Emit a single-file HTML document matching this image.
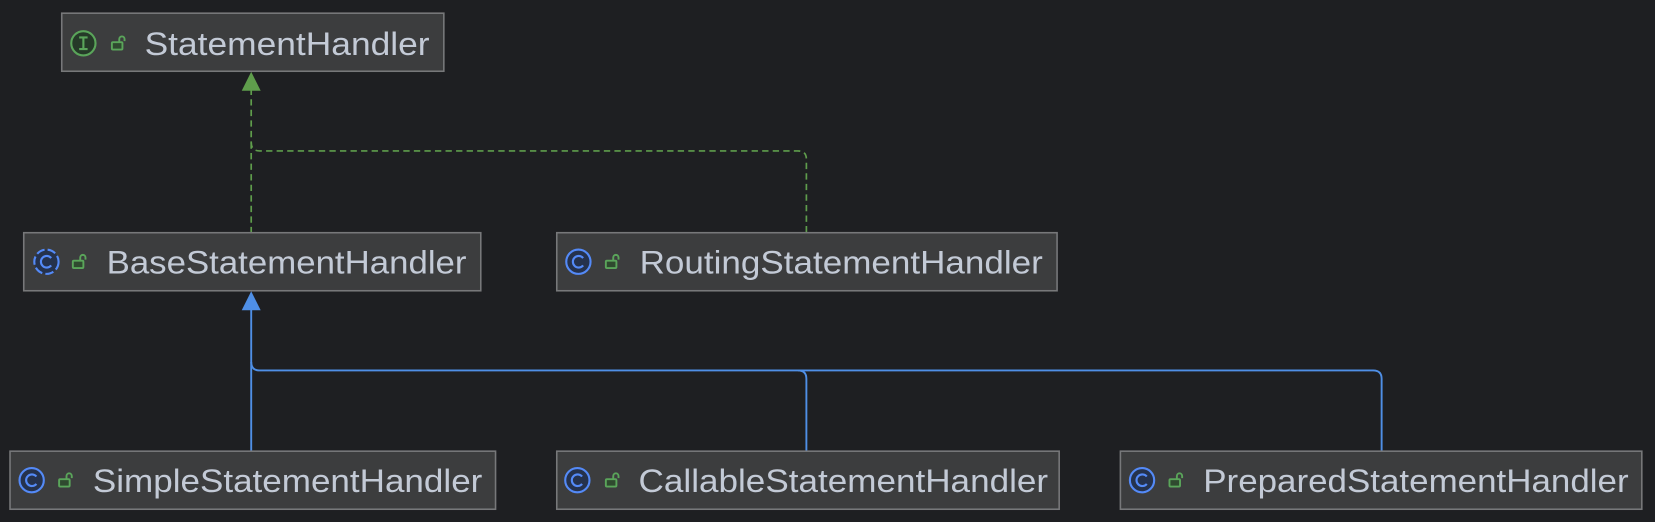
<!DOCTYPE html>
<html><head><meta charset="utf-8"><style>
html,body{margin:0;padding:0;background:#1e1f22;width:1655px;height:522px;overflow:hidden}
svg{display:block}
text{font-family:"Liberation Sans",sans-serif;font-size:31px;fill:#c3cad6}
</style></head><body>
<svg width="1655" height="522" viewBox="0 0 1568 494.6" preserveAspectRatio="none">
<defs>
<g id="lock"><rect x="-6" y="-1" width="10" height="7" rx="1" fill="#2f4a2f" stroke="#5aa55a" stroke-width="1.8"/><path d="M1 -1 V-4 a2.5 2.5 0 0 1 5 0 V-2" fill="none" stroke="#5aa55a" stroke-width="1.8"/></g>
<g id="cls"><circle r="11.5" fill="#25324d" stroke="#548af7" stroke-width="2"/><path d="M4.5 -3.5 A5.5 5.5 0 1 0 4.5 3.5" fill="none" stroke="#548af7" stroke-width="2"/></g>
<g id="abs"><circle r="11.5" fill="#25324d" stroke="#548af7" stroke-width="2" stroke-dasharray="8 3"/><path d="M4.5 -3.5 A5.5 5.5 0 1 0 4.5 3.5" fill="none" stroke="#548af7" stroke-width="2"/></g>
</defs>
<g fill="none" stroke="#5f9d4c" stroke-width="1.6" stroke-dasharray="6 4">
<path d="M238 84 V135 q0 8 8 8 H756 q8 0 8 8 V220"/>
<path d="M238 135 V220"/>
</g>
<path d="M238 68 L229 86 L247 86 Z" fill="#5f9d4c"/>
<g fill="none" stroke="#4f8fe6" stroke-width="1.8">
<path d="M238 290 V427"/>
<path d="M238 343 q0 8 8 8 H756 q8 0 8 8 V427"/>
<path d="M756 351 H1301 q8 0 8 8 V427"/>
</g>
<path d="M238 276 L229 294 L247 294 Z" fill="#4f8fe6"/>
<g fill="#3c3d3e" stroke="#77787a" stroke-width="1.5">
<rect x="58.5" y="12.5" width="362" height="55"/>
<rect x="22.5" y="220.5" width="433" height="55"/>
<rect x="527.5" y="220.5" width="474" height="55"/>
<rect x="9.5" y="427.5" width="460" height="55"/>
<rect x="527.5" y="427.5" width="476" height="55"/>
<rect x="1061.5" y="427.5" width="494" height="55"/>
</g>
<g transform="translate(79,41)"><circle r="11.5" fill="#253a28" stroke="#5aa55a" stroke-width="2"/><path d="M-4 -5.5 H4 M0 -5.5 V5.5 M-4 5.5 H4" stroke="#5aa55a" stroke-width="2" fill="none"/></g>
<use href="#lock" x="112" y="41"/>
<use href="#abs" x="44" y="248"/><use href="#lock" x="75" y="248"/>
<use href="#cls" x="548" y="248"/><use href="#lock" x="580" y="248"/>
<use href="#cls" x="30" y="455"/><use href="#lock" x="62" y="455"/>
<use href="#cls" x="547" y="455"/><use href="#lock" x="580" y="455"/>
<use href="#cls" x="1082" y="455"/><use href="#lock" x="1114" y="455"/>
<text x="137" y="52" textLength="270" lengthAdjust="spacingAndGlyphs">StatementHandler</text>
<text x="101" y="259" textLength="341" lengthAdjust="spacingAndGlyphs">BaseStatementHandler</text>
<text x="606" y="259" textLength="382" lengthAdjust="spacingAndGlyphs">RoutingStatementHandler</text>
<text x="88" y="466" textLength="369" lengthAdjust="spacingAndGlyphs">SimpleStatementHandler</text>
<text x="605" y="466" textLength="388" lengthAdjust="spacingAndGlyphs">CallableStatementHandler</text>
<text x="1140" y="466" textLength="403" lengthAdjust="spacingAndGlyphs">PreparedStatementHandler</text>
</svg>
</body></html>
